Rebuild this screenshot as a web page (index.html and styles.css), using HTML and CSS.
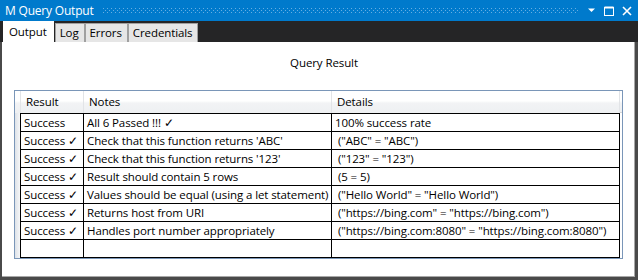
FILE: index.html
```html
<!DOCTYPE html>
<html>
<head>
<meta charset="utf-8">
<link rel="stylesheet" href="styles.css">
</head>
<body>
<div class="window">
  <div class="titlebar">
    <span class="title">M Query Output</span>
    <span class="grip"></span>
    <span class="btns">
      <svg class="ico" width="9" height="5" viewBox="0 0 9 5"><path d="M1 0.5h7L4.5 4z" fill="#fff"/></svg>
      <svg class="ico" width="10" height="10" viewBox="0 0 10 10"><path d="M0.5 1h9M0.5 2h9" stroke="#fff" stroke-width="1"/><rect x="0.5" y="1.5" width="9" height="8" fill="none" stroke="#fff" stroke-width="1"/></svg>
      <svg class="ico" width="10" height="10" viewBox="0 0 10 10"><path d="M1 1l8 8M9 1l-8 8" stroke="#fff" stroke-width="1.6"/></svg>
    </span>
  </div>
  <div class="tabstrip">
    <div class="tab active">Output</div>
    <div class="tab">Log</div>
    <div class="tab">Errors</div>
    <div class="tab">Credentials</div>
  </div>
  <div class="pane">
    <div class="caption">Query Result</div>
    <div class="grid">
      <div class="row head">
        <div class="rh"></div><div class="c">Result</div><div class="c">Notes</div><div class="c">Details</div><div class="fill"></div>
      </div>
      <div class="row">
        <div class="rh"></div><div class="c">Success</div><div class="c">All 6 Passed !!! ✓</div><div class="c">100% success rate</div><div class="fill"></div>
      </div>
      <div class="row">
        <div class="rh"></div><div class="c">Success ✓</div><div class="c">Check that this function returns 'ABC'</div><div class="c"> ("ABC" = "ABC")</div><div class="fill"></div>
      </div>
      <div class="row">
        <div class="rh"></div><div class="c">Success ✓</div><div class="c">Check that this function returns '123'</div><div class="c"> ("123" = "123")</div><div class="fill"></div>
      </div>
      <div class="row">
        <div class="rh"></div><div class="c">Success ✓</div><div class="c">Result should contain 5 rows</div><div class="c"> (5 = 5)</div><div class="fill"></div>
      </div>
      <div class="row">
        <div class="rh"></div><div class="c">Success ✓</div><div class="c">Values should be equal (using a let statement)</div><div class="c"> ("Hello World" = "Hello World")</div><div class="fill"></div>
      </div>
      <div class="row">
        <div class="rh"></div><div class="c">Success ✓</div><div class="c">Returns host from URI</div><div class="c"> ("https://bing.com" = "https://bing.com")</div><div class="fill"></div>
      </div>
      <div class="row">
        <div class="rh"></div><div class="c">Success ✓</div><div class="c">Handles port number appropriately</div><div class="c"> ("https://bing.com:8080" = "https://bing.com:8080")</div><div class="fill"></div>
      </div>
      <div class="row last">
        <div class="rh"></div><div class="c"></div><div class="c"></div><div class="c"></div><div class="fill"></div>
      </div>
    </div>
  </div>
</div>
</body>
</html>
```

FILE: styles.css
```css
html, body {
  margin: 0;
  padding: 0;
  background: #2d2d30;
}
body {
  font-family: "Open Sans", "Noto Sans", sans-serif;
  font-size: 11.5px;
  letter-spacing: -0.1px;
  color: #000;
}
.window {
  width: 638px;
  height: 280px;
  display: flex;
  flex-direction: column;
  overflow: hidden;
}
.titlebar {
  height: 21px;
  flex: none;
  background: #007acc;
  color: #fff;
  display: flex;
  align-items: center;
}
.title {
  font-size: 12px;
  letter-spacing: -0.2px;
  padding-left: 5px;
  white-space: nowrap;
}
.grip {
  flex: 1;
  height: 5px;
  margin: 0 8px 0 9px;
  background-image:
    radial-gradient(circle at 0.5px 0.5px, #66aee2 0.7px, transparent 0.8px),
    radial-gradient(circle at 0.5px 0.5px, #66aee2 0.7px, transparent 0.8px);
  background-size: 4px 4px, 4px 4px;
  background-position: 0 0, 2px 2px;
}
.btns {
  display: flex;
  align-items: center;
  gap: 8px;
  padding-right: 6px;
}
.ico { display: block; }
.tabstrip {
  height: 21px;
  flex: none;
  background: #252526;
  display: flex;
  align-items: flex-end;
  padding-left: 3px;
}
.tab {
  height: 18px;
  line-height: 18px;
  padding: 0 5px 0 4px;
  background: #e6e6e6;
  border: 1px solid #a0a0a0;
  border-bottom: none;
  white-space: nowrap;
}
.tab.active {
  height: 21px;
  line-height: 22px;
  background: #fff;
  border: none;
  padding: 0 7px 0 6px;
  margin-right: 1px;
}
.pane {
  flex: 1;
  background: #fff;
  border-left: 2px solid #4a4a4a;
  border-right: 3px solid #4a4a4a;
  border-bottom: 3px solid #4a4a4a;
  box-shadow: inset -1px -1px 0 #a8a8a8;
  padding: 0 0 0 12px;
}
.caption {
  text-align: center;
  padding-top: 13px;
  height: 35px;
  line-height: 16px;
  box-sizing: border-box;
  width: 620px;
}
.grid {
  margin-top: 13px;
  width: 607px;
  border: 1px solid #7a96b8;
}
.row {
  display: grid;
  grid-template-columns: 5px 63px 248px 289px 2px;
  height: 18px;
}
.row .c {
  border-left: 1px solid #000;
  border-top: 1px solid #000;
  padding-left: 3px;
  line-height: 17px;
  white-space: pre;
  overflow: hidden;
}
.row .c:nth-child(4) {
  border-right: 1px solid #000;
}
.rh {
  background: linear-gradient(to right, #dde2e8, #f6f7f8);
}
.row.last { height: 19px; }
.row.last .c { border-bottom: 1px solid #000; }
.row.head {
  height: 22px;
  background: linear-gradient(#ffffff 0%, #ffffff 45%, #f2f3f5 55%, #eef0f2 100%);
}
.row.head .rh { background: transparent; }
.row.head .c {
  border-top: none;
  border-left: 1px solid #e2e4e7;
  line-height: 22px;
  padding-left: 5px;
}
.row.head .c:nth-child(4) { border-right: 1px solid #e2e4e7; }
.row.head .fill { border-bottom: 1px solid #d5d5d5; box-sizing: border-box; }
```
